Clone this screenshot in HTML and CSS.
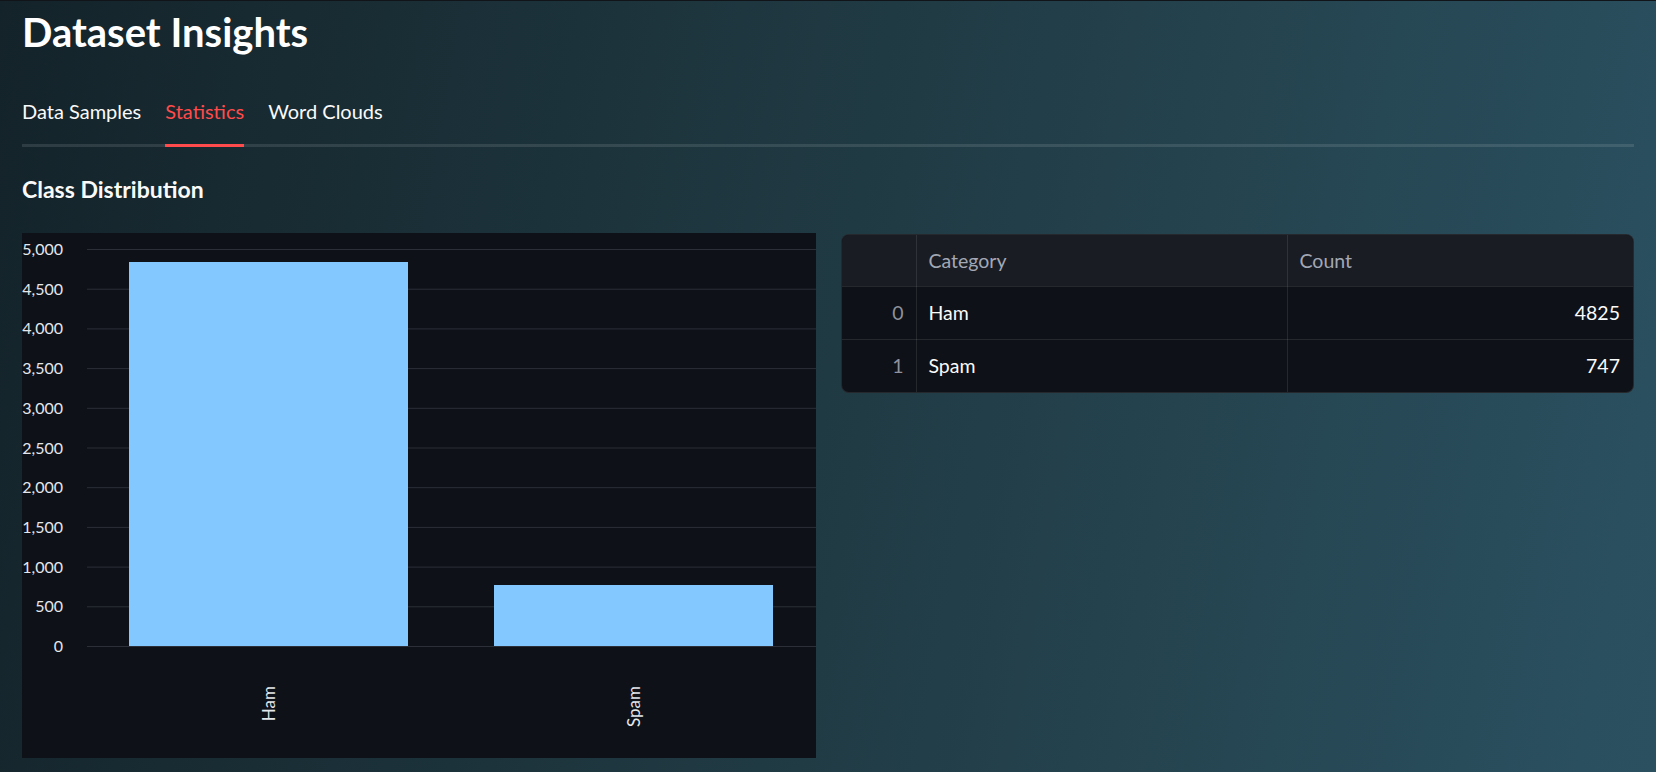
FILE: index.html
```html
<!DOCTYPE html>
<html lang="en">
<head>
<meta charset="utf-8">
<title>Dataset Insights</title>
<link rel="stylesheet" href="styles.css">
</head>
<body>
<main class="main">
  <h1 class="title">Dataset Insights</h1>
  <nav class="tabs">
    <div class="tab">Data Samples</div>
    <div class="tab active">Statistics</div>
    <div class="tab">Word Clouds</div>
  </nav>
  <h3 class="section-title">Class Distribution</h3>
  <div class="columns">
    <div class="chart">
      <svg width="794" height="525" viewBox="0 0 794 525" xmlns="http://www.w3.org/2000/svg">
        <g class="grid" stroke="#2c2f38" stroke-width="1">
          <line x1="65" x2="794" y1="16.5" y2="16.5"/>
          <line x1="65" x2="794" y1="56.2" y2="56.2"/>
          <line x1="65" x2="794" y1="95.9" y2="95.9"/>
          <line x1="65" x2="794" y1="135.6" y2="135.6"/>
          <line x1="65" x2="794" y1="175.3" y2="175.3"/>
          <line x1="65" x2="794" y1="215" y2="215"/>
          <line x1="65" x2="794" y1="254.7" y2="254.7"/>
          <line x1="65" x2="794" y1="294.4" y2="294.4"/>
          <line x1="65" x2="794" y1="334.1" y2="334.1"/>
          <line x1="65" x2="794" y1="373.8" y2="373.8"/>
          <line x1="65" x2="794" y1="413.5" y2="413.5"/>
        </g>
        <g class="ylabels" font-family="Lato, 'Noto Sans', sans-serif" font-size="16" fill="#e4e7ec" text-anchor="end">
          <text x="41" y="22">5,000</text>
          <text x="41" y="61.7">4,500</text>
          <text x="41" y="101.4">4,000</text>
          <text x="41" y="141.1">3,500</text>
          <text x="41" y="180.8">3,000</text>
          <text x="41" y="220.5">2,500</text>
          <text x="41" y="260.2">2,000</text>
          <text x="41" y="299.9">1,500</text>
          <text x="41" y="339.6">1,000</text>
          <text x="41" y="379.3">500</text>
          <text x="41" y="419">0</text>
        </g>
        <rect x="107" y="29" width="279" height="384" fill="#83c9ff"/>
        <rect x="472" y="352" width="279" height="61" fill="#83c9ff"/>
        <g class="xlabels" font-family="Lato, 'Noto Sans', sans-serif" font-size="17" fill="#e4e7ec" text-anchor="end">
          <text transform="translate(253 453) rotate(-90)">Ham</text>
          <text transform="translate(618 453) rotate(-90)">Spam</text>
        </g>
      </svg>
    </div>
    <div class="table-wrap">
      <table class="data-table">
        <thead>
          <tr><th class="idx"></th><th>Category</th><th>Count</th></tr>
        </thead>
        <tbody>
          <tr><td class="idx">0</td><td>Ham</td><td class="num">4825</td></tr>
          <tr><td class="idx">1</td><td>Spam</td><td class="num">747</td></tr>
        </tbody>
      </table>
    </div>
  </div>
</main>
</body>
</html>
```
FILE: styles.css
```css
html, body {
  margin: 0;
  padding: 0;
}
body {
  min-height: 100vh;
  box-sizing: border-box;
  border-top: 1px solid #111418;
  background: linear-gradient(100deg, #14232a 0%, #203a43 50%, #2b5161 100%);
  font-family: Lato, "Noto Sans", sans-serif;
  color: #fafafa;
  overflow: hidden;
}
.main {
  padding: 8px 22px 0 22px;
}
.title {
  margin: 0;
  font-size: 40px;
  font-weight: 700;
  line-height: 47px;
  color: #ffffff;
}
.tabs {
  display: flex;
  gap: 24px;
  margin-top: 44px;
  border-bottom: 3px solid rgba(255, 255, 255, 0.11);
}
.tab {
  font-size: 20px;
  line-height: 23px;
  padding-bottom: 21px;
  color: #fafafa;
}
.tab.active {
  color: #ff4b4b;
  border-bottom: 3px solid #ff4b4b;
  margin-bottom: -3px;
}
.section-title {
  margin: 29px 0 0 0;
  font-size: 23px;
  font-weight: 700;
  line-height: 26px;
}
.columns {
  display: grid;
  grid-template-columns: 794px 1fr;
  gap: 25px;
  margin-top: 31px;
  align-items: start;
}
.chart {
  background: #0e1117;
  height: 525px;
}
.chart svg {
  display: block;
}
.table-wrap {
  margin-top: 1px;
  border: 1px solid rgba(250, 250, 250, 0.1);
  border-radius: 8px;
  overflow: hidden;
  background: #0e1117;
}
.data-table {
  width: 100%;
  border-collapse: collapse;
  font-size: 19.5px;
}
.data-table th,
.data-table td {
  height: 51px;
  padding: 0 12px;
  text-align: left;
  border-right: 1px solid rgba(250, 250, 250, 0.1);
  border-bottom: 1px solid rgba(250, 250, 250, 0.1);
  font-weight: 400;
  box-sizing: border-box;
}
.data-table tbody td {
  height: 53px;
}
.data-table th:last-child,
.data-table td:last-child {
  border-right: none;
}
.data-table tbody tr:last-child td {
  border-bottom: none;
}
.data-table thead th {
  background: #1a1c24;
  color: #a3a8b4;
}
.data-table .idx {
  width: 74px;
  box-sizing: border-box;
  text-align: right;
  color: #8e929c;
}
.data-table th:nth-child(2) {
  width: 371px;
}
.data-table .num {
  text-align: right;
  padding-right: 13px;
}
```
